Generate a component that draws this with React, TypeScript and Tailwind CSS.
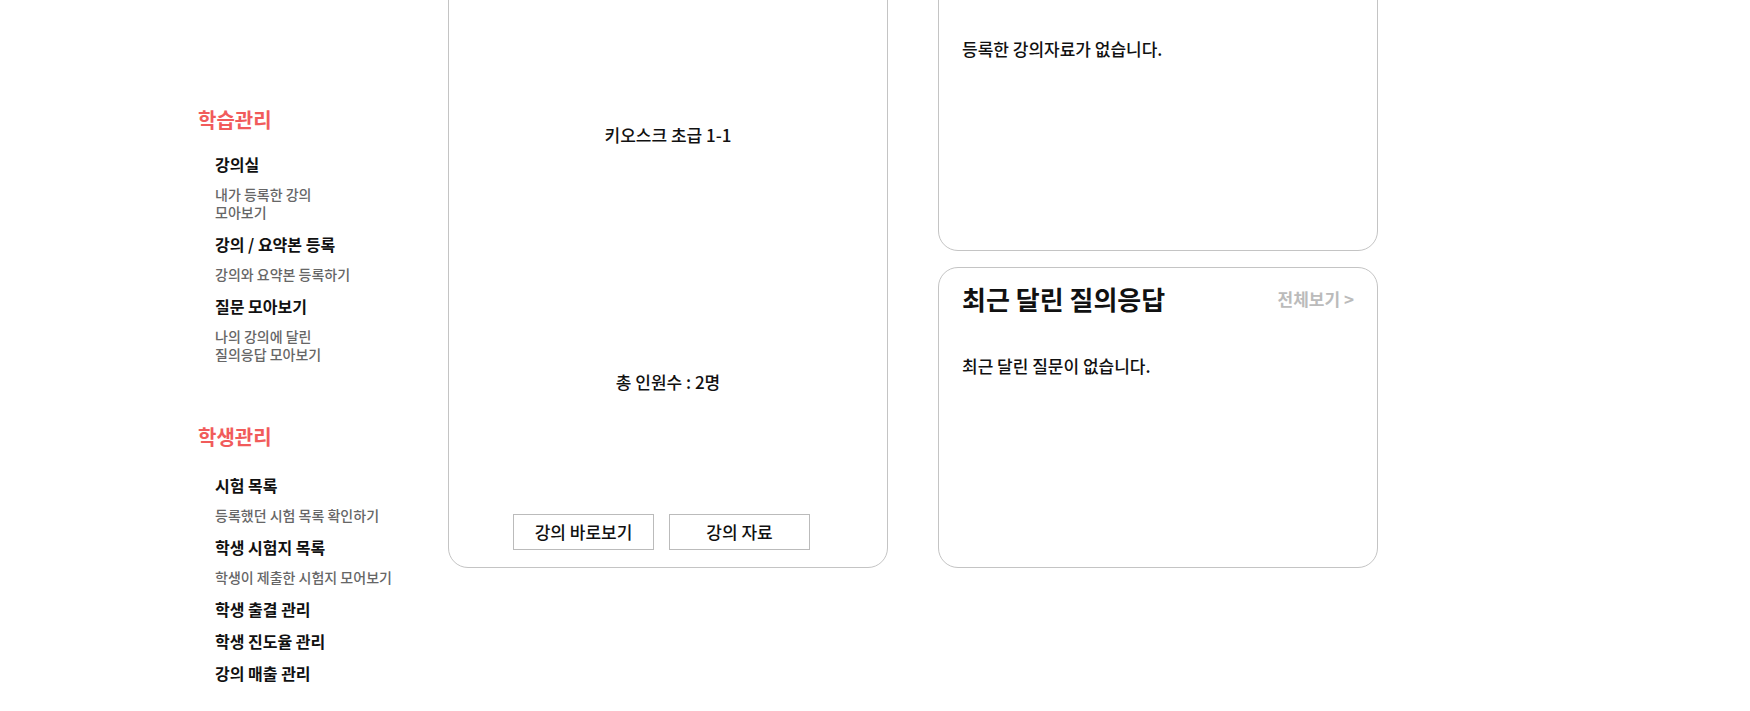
import React from "react";

const FONT = { fontFamily: '"Noto Sans CJK KR", "Noto Sans", sans-serif' };

type Item = { title: string; sub?: React.ReactNode; mt: string };

const studyItems: Item[] = [
  { title: "강의실", sub: (<>내가 등록한 강의<br />모아보기</>), mt: "mt-0" },
  { title: "강의 / 요약본 등록", sub: "강의와 요약본 등록하기", mt: "mt-[13px]" },
  { title: "질문 모아보기", sub: (<>나의 강의에 달린<br />질의응답 모아보기</>), mt: "mt-[13px]" },
];

const studentItems: Item[] = [
  { title: "시험 목록", sub: "등록했던 시험 목록 확인하기", mt: "mt-0" },
  { title: "학생 시험지 목록", sub: "학생이 제출한 시험지 모어보기", mt: "mt-[13px]" },
  { title: "학생 출결 관리", mt: "mt-[13px]" },
  { title: "학생 진도율 관리", mt: "mt-[12px]" },
  { title: "강의 매출 관리", mt: "mt-[12px]" },
];

function MenuList({ items }: { items: Item[] }) {
  return (
    <ul className="pl-[17px]">
      {items.map((it) => (
        <li key={it.title} className={it.mt}>
          <div className="text-[16px] leading-[20px] font-bold text-[#111]">{it.title}</div>
          {it.sub && (
            <div className="mt-[11px] text-[14px] leading-[18px] font-medium text-[#666]">{it.sub}</div>
          )}
        </li>
      ))}
    </ul>
  );
}

function InfoCard({ title, empty }: { title: string; empty: string }) {
  return (
    <div className="w-[440px] h-[301px] border border-[#c4c4c4] rounded-[20px] px-[23px] pt-[15px] bg-white">
      <div className="flex items-center justify-between">
        <h2 className="text-[26px] leading-[32px] font-bold text-[#111]">{title}</h2>
        <span className="text-[17px] leading-[24px] font-bold text-[#bbbbbb]">전체보기 &gt;</span>
      </div>
      <p className="mt-[39px] text-[17px] leading-[24px] font-medium text-[#111]">{empty}</p>
    </div>
  );
}

export default function App() {
  return (
    <div className="w-full h-[711px] overflow-hidden bg-white" style={FONT}>
      <div className="flex items-start pl-[198px]">
        <aside className="w-[250px] shrink-0">
          <h3 className="mt-[107px] text-[20px] leading-[26px] font-bold text-[#f15b5b]">학습관리</h3>
          <div className="mt-[21px]">
            <MenuList items={studyItems} />
          </div>
          <h3 className="mt-[61px] text-[20px] leading-[26px] font-bold text-[#f15b5b]">학생관리</h3>
          <div className="mt-[25px]">
            <MenuList items={studentItems} />
          </div>
        </aside>

        <main className="-mt-[50px] flex gap-[50px]">
          <div className="w-[440px] h-[618px] border border-[#c4c4c4] rounded-[20px] flex flex-col items-center bg-white">
            <p className="mt-[172px] text-[17px] leading-[24px] font-medium text-[#111]">키오스크 초급 1-1</p>
            <p className="mt-[223px] text-[17px] leading-[24px] font-medium text-[#111]">총 인원수 : 2명</p>
            <div className="mt-[120px] self-start ml-[64px] flex gap-[15px]">
              <button className="w-[141px] h-[36px] border border-[#bbbbbb] bg-white text-[17px] font-medium text-[#111]">강의 바로보기</button>
              <button className="w-[141px] h-[36px] border border-[#bbbbbb] bg-white text-[17px] font-medium text-[#111]">강의 자료</button>
            </div>
          </div>

          <div className="flex flex-col gap-[16px]">
            <InfoCard title="최근 등록한 강의자료" empty="등록한 강의자료가 없습니다." />
            <InfoCard title="최근 달린 질의응답" empty="최근 달린 질문이 없습니다." />
          </div>
        </main>
      </div>
    </div>
  );
}
